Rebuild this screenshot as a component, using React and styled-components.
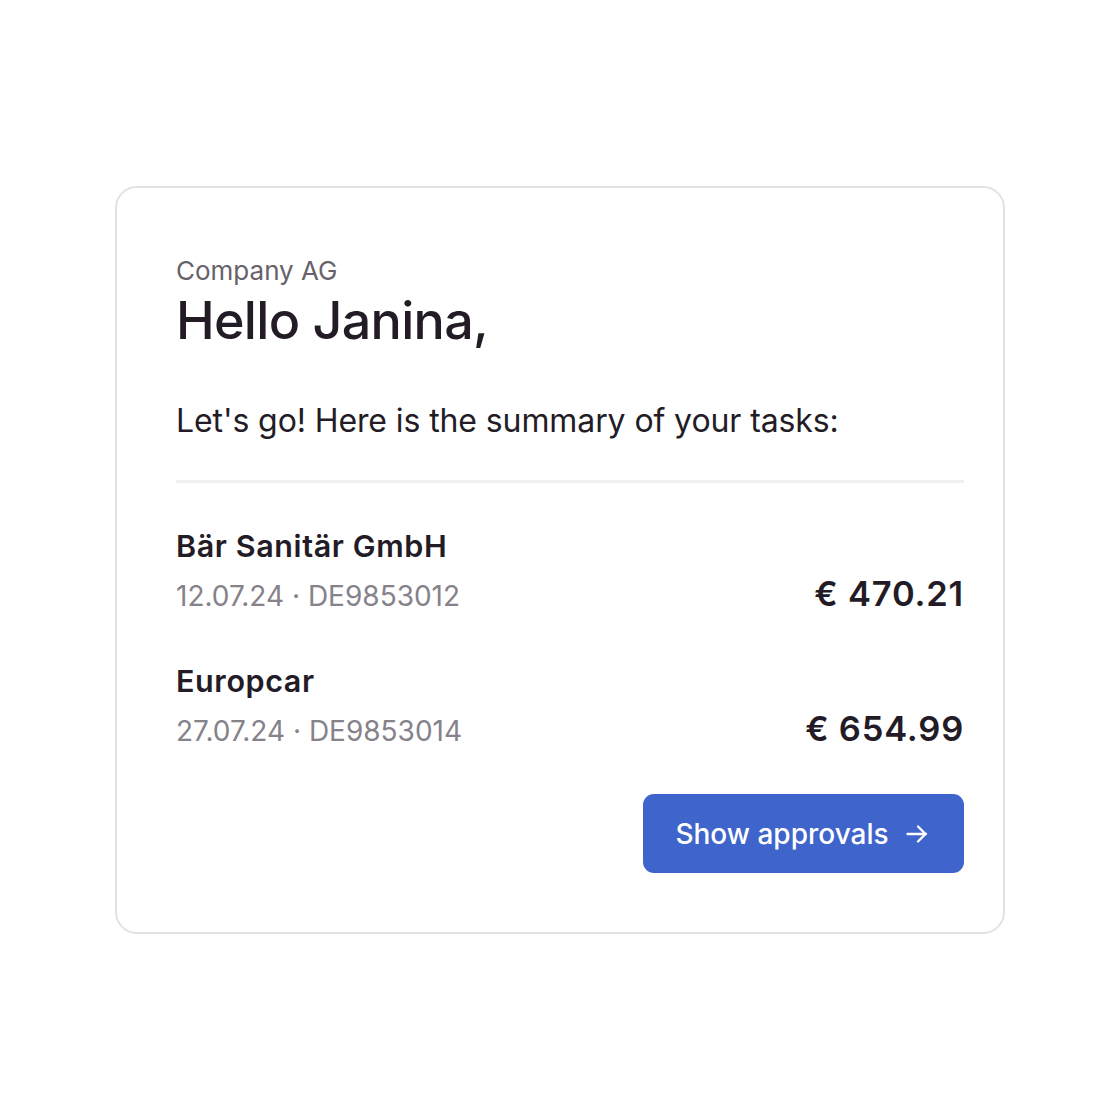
import React from "react";
import styled, { createGlobalStyle } from "styled-components";

const Global = createGlobalStyle`
  html, body { margin: 0; padding: 0; background: #ffffff; }
  body { font-family: Inter, "Noto Sans", sans-serif; color: #231c26; }
`;

const Page = styled.div`
  width: 1120px;
  height: 1120px;
  display: flex;
  align-items: flex-start;
  justify-content: center;
  padding-top: 186px;
  box-sizing: border-box;
`;

const Card = styled.div`
  width: 890px;
  box-sizing: border-box;
  border: 2px solid #e2e2e3;
  border-radius: 22px;
  background: #fff;
  padding: 67px 39px 59px 59px;
  display: flex;
  flex-direction: column;
`;

const Company = styled.div`
  font-size: 26px;
  line-height: 32px;
  color: #67626a;
`;

const Greeting = styled.h1`
  margin: 4px 0 0;
  font-size: 52px;
  font-weight: 500;
  line-height: 60px;
  letter-spacing: -0.7px;
`;

const Intro = styled.p`
  margin: 50px 0 0;
  font-size: 32px;
  line-height: 40px;
  letter-spacing: -0.1px;
`;

const Divider = styled.hr`
  border: none;
  height: 3px;
  background: #f0f0f1;
  margin: 39px 0 0;
`;

const List = styled.div`
  display: flex;
  flex-direction: column;
  gap: 48px;
  margin-top: 44px;
`;

const Row = styled.div`
  display: flex;
  align-items: flex-end;
  justify-content: space-between;
`;

const Info = styled.div`
  display: flex;
  flex-direction: column;
  gap: 13px;
`;

const Name = styled.div`
  font-size: 30.5px;
  font-weight: 600;
  line-height: 38px;
  letter-spacing: 0.6px;
`;

const Meta = styled.div`
  font-size: 28px;
  line-height: 36px;
  color: #85828a;
`;

const Amount = styled.div`
  font-size: 34.5px;
  font-weight: 600;
  line-height: 40px;
  letter-spacing: 0.8px;
`;

const Actions = styled.div`
  display: flex;
  justify-content: flex-end;
  margin-top: 45px;
`;

const Button = styled.button`
  width: 321px;
  height: 79px;
  padding: 0 0 0 0;
  border: none;
  border-radius: 11px;
  background: #3f64cb;
  color: #fff;
  font-family: inherit;
  font-size: 28px;
  font-weight: 500;
  display: flex;
  align-items: center;
  justify-content: center;
  gap: 17px;
  cursor: pointer;
`;

const Arrow = styled.svg`
  width: 22px;
  height: 22px;
  flex: none;
  margin-right: 4px;
`;

const items = [
  { name: "Bär Sanitär GmbH", date: "12.07.24", id: "DE9853012", amount: "€ 470.21" },
  { name: "Europcar", date: "27.07.24", id: "DE9853014", amount: "€ 654.99" },
];

export default function App() {
  return (
    <>
      <Global />
      <Page>
        <Card>
          <Company>Company AG</Company>
          <Greeting>Hello Janina,</Greeting>
          <Intro>Let's go! Here is the summary of your tasks:</Intro>
          <Divider />
          <List>
            {items.map((it) => (
              <Row key={it.id}>
                <Info>
                  <Name>{it.name}</Name>
                  <Meta>
                    {it.date} · {it.id}
                  </Meta>
                </Info>
                <Amount>{it.amount}</Amount>
              </Row>
            ))}
          </List>
          <Actions>
            <Button>
              Show approvals
              <Arrow viewBox="0 0 22 22" fill="none" stroke="#fff" strokeWidth="2.3" strokeLinecap="round" strokeLinejoin="round">
                <path d="M1.5 11h18.5" />
                <path d="M12 3.5l7.5 7.5-7.5 7.5" />
              </Arrow>
            </Button>
          </Actions>
        </Card>
      </Page>
    </>
  );
}
